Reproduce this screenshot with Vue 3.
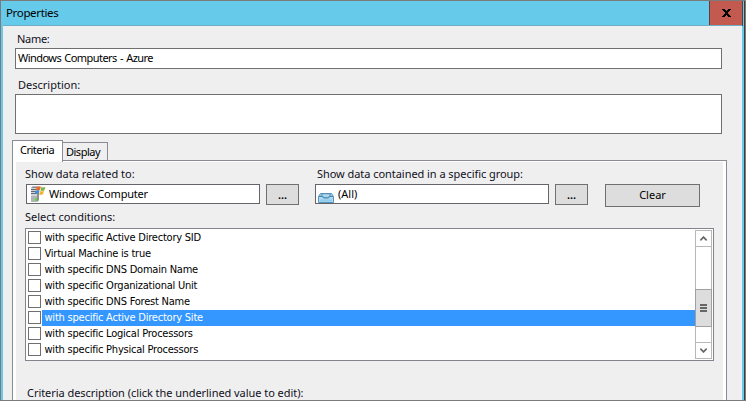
<script setup>
import { ref } from 'vue'

const name = ref('Windows Computers - Azure')
const conditions = [
  'with specific Active Directory SID',
  'Virtual Machine is true',
  'with specific DNS Domain Name',
  'with specific Organizational Unit',
  'with specific DNS Forest Name',
  'with specific Active Directory Site',
  'with specific Logical Processors',
  'with specific Physical Processors',
]
const selected = ref(5)
</script>

<template>
  <div class="window">
    <header class="titlebar">
      <span class="title">Properties</span>
      <button class="close" aria-label="Close">
        <svg width="9" height="8" viewBox="0 0 9 8" shape-rendering="crispEdges">
          <path d="M0 0h3v1h1v1h1v-1h1v-1h3v1h-1v1h-1v1h-1v2h1v1h1v1h1v1h-3v-1h-1v-1h-1v1h-1v1h-3v-1h1v-1h1v-1h1v-2h-1v-1h-1v-1h-1z" />
        </svg>
      </button>
    </header>

    <main class="client">
      <label class="label name-label">Name:</label>
      <div class="text-box name-box">{{ name }}</div>
      <label class="label desc-label">Description:</label>
      <div class="text-box desc-box"></div>

      <nav class="tabs">
        <div class="tab active">Criteria</div>
        <div class="tab">Display</div>
      </nav>

      <section class="panel">
        <div class="panel-body">
          <div class="pickers">
            <div class="picker related">
              <label class="label">Show data related to:</label>
              <div class="picker-row">
                <div class="field">
                  <svg class="server" width="16" height="17" viewBox="0 0 16 17">
                    <path d="M1 2 3 .5h6V14l-2 2H1z" fill="#d3d5d7" />
                    <path d="M7 3.500 9 2v12l-2 2z" fill="#8d9194" />
                    <path d="M1 2 2.500.5H8L7 2z" fill="#85898d" />
                    <path d="M1 3.500h5M1 5.500h5M1 7.500h6" stroke="#62676b" />
                    <path d="M1 10v6h6v-6z" fill="#b2b5b8" />
                    <path d="M5 12h2v3H5z" fill="#5ddb3f" />
                    <path d="M6.500 1.300Q9-.3 11 .8L9.800 4.300Q8 3.300 5.600 4.500z" fill="#e9692f" />
                    <path d="M11.400 1.100q1.800.9 4-.4l-1 3.500q-2 1.300-4 .3z" fill="#7fb545" />
                    <path d="M5.400 5Q7.600 3.800 9.600 4.800L8.600 8Q6.800 7 4.600 8.200z" fill="#438fda" />
                    <path d="M10.100 5q2 .9 4-.2L13 8.200Q11 9.400 9.100 8.400z" fill="#f5b12d" />
                  </svg>
                  <span>Windows Computer</span>
                </div>
                <button class="button browse">...</button>
              </div>
            </div>

            <div class="picker group">
              <label class="label">Show data contained in a specific group:</label>
              <div class="picker-row">
                <div class="field">
                  <svg class="tray" width="16" height="10" viewBox="0 0 16 10">
                    <path d="M2.500.5h11l2 3v6H.5v-6z" fill="#b4daef" stroke="#5590b9" />
                    <path d="M3 1h10l1 2.500h-2.500L10.500 5h-5l-1-1.500H2z" fill="#78afd0" />
                    <path d="M5 1.500h6v1.300l-1 1H6l-1-1z" fill="#b5dced" />
                    <path d="M1 3.500h3.500l1 1.500h5l1-1.500H15" fill="none" stroke="#4584b3" />
                    <path d="M2 7.500h12" stroke="#8bcdea" stroke-width="2" />
                  </svg>
                  <span>(All)</span>
                </div>
                <button class="button browse">...</button>
              </div>
            </div>

            <button class="button clear">Clear</button>
          </div>

          <label class="label conditions-label">Select conditions:</label>
          <div class="list">
            <ul class="items">
              <li v-for="(condition, i) in conditions" :key="condition" class="item" @click="selected = i">
                <span class="check"></span>
                <span class="item-text" :class="{ selected: i === selected }">{{ condition }}</span>
              </li>
            </ul>
            <div class="scrollbar">
              <div class="arrow up">
                <svg width="7" height="5" viewBox="0 0 7 5"><path d="M.3 4.300 3.500 1.100 6.700 4.300" /></svg>
              </div>
              <div class="thumb"><i></i><i></i><i></i></div>
              <div class="arrow down">
                <svg width="7" height="5" viewBox="0 0 7 5"><path d="M.3.700 3.500 3.900 6.700.700" /></svg>
              </div>
            </div>
          </div>
          <div class="label criteria-description">Criteria description (click the underlined value to edit):</div>
        </div>
      </section>
    </main>
  </div>
</template>

<style>
body {
  margin: 0;
  overflow: hidden;
}
</style>

<style scoped>
* {
  box-sizing: border-box;
}
.window {
  display: flex;
  flex-direction: column;
  width: 746px;
  height: 401px;
  overflow: hidden;
  border: 1px solid #7b7b7b;
  background: linear-gradient(to right, #66caea 741px, #66caea 743px, #3c3c3c 743px);
  color: #000;
  font: 11px/14px 'Noto Sans', sans-serif;
  white-space: nowrap;
}
.titlebar {
  display: flex;
  flex: none;
  justify-content: space-between;
  height: 25px;
  padding-right: 2px;
}
.title {
  padding: 5px 0 0 5px;
  font-size: 11.500px;
  letter-spacing: -0.350px;
}
.close {
  display: flex;
  justify-content: center;
  align-items: center;
  width: 34px;
  height: 25px;
  padding: 0;
  border: 1px solid #5e3f3e;
  border-top: 0;
  background: #c35a4f;
}
.client {
  display: flex;
  flex: 1;
  flex-direction: column;
  min-height: 0;
  width: 739px;
  margin-left: 2px;
  padding: 6px 15px 0 9px;
  background: #efefef;
  box-shadow: 0 -1px #6fafc6;
}
.label {
  display: block;
  height: 14px;
  color: #10101c;
}
.name-label {
  padding-left: 5px;
  letter-spacing: -0.300px;
}
.desc-label {
  margin-top: 9px;
  padding-left: 6px;
}
.text-box {
  flex: none;
  width: 707px;
  margin: 2px 0 0 3px;
  border: 1px solid #707070;
  background: #fff;
}
.name-box {
  height: 21px;
  padding: 2px 0 0 2px;
  letter-spacing: -0.550px;
  word-spacing: 0.900px;
}
.desc-box {
  height: 40px;
}
.tabs {
  display: flex;
  flex: none;
  align-items: flex-end;
  height: 20px;
  margin-top: 6px;
}
.tab {
  width: 45px;
  height: 18px;
  padding: 2px 0 0 3px;
  border: 1px solid #8b8b95;
  border-bottom: 0;
  border-left: 0;
  letter-spacing: -0.500px;
}
.tab.active {
  z-index: 1;
  width: 51px;
  height: 22px;
  margin-bottom: -2px;
  padding: 2px 0 0 7px;
  border-left: 1px solid #8b8b95;
  background: #fff;
}
.panel {
  flex: 1;
  min-height: 0;
  width: 715px;
  padding: 1px 3px 0;
  border: 1px solid #8b8b95;
  border-bottom: 0;
  background: #fff;
}
.panel-body {
  height: 100%;
  padding: 5px 9px 0;
  background: #efefef;
}
.pickers {
  display: flex;
  align-items: flex-end;
  height: 40px;
}
.picker-row {
  display: flex;
  align-items: flex-start;
  gap: 6px;
  height: 23px;
  margin-top: 3px;
}
.related .picker-row {
  margin-left: 1px;
}
.group {
  margin-left: 16px;
}
.group .label {
  padding-left: 2px;
  letter-spacing: -0.050px;
}
.field {
  display: flex;
  width: 234px;
  height: 20px;
  padding-top: 2px;
  border: 1px solid #64646a;
  background: #fff;
}
.related .field {
  letter-spacing: -0.190px;
}
.server {
  margin: -1px 3px 0 3px;
}
.tray {
  margin: 6px 4px 0 2px;
}
.button {
  padding: 0;
  border: 1px solid #707070;
  background: #ddd;
  color: #000;
  font: inherit;
}
.browse {
  width: 33px;
  height: 21px;
  font-weight: 600;
}
.clear {
  width: 95px;
  height: 23px;
  margin-left: 17px;
  padding-bottom: 2px;
}
.conditions-label {
  margin-top: 3px;
}
.list {
  display: flex;
  width: 689px;
  height: 133px;
  margin-top: 4px;
  padding: 1px;
  border: 1px solid #84848e;
  background: #fff;
}
.items {
  flex: 1;
  margin: 0;
  padding: 0 0 0 1px;
  list-style: none;
  font: 11px/16px 'DejaVu Sans Condensed', 'DejaVu Sans', sans-serif;
  letter-spacing: -0.220px;
}
.item {
  display: flex;
  height: 16px;
}
.check {
  width: 13px;
  height: 13px;
  margin: 1px 1px 0 0;
  border: 1px solid #707070;
}
.item-text {
  flex: 1;
  padding-left: 2.500px;
  line-height: 15px;
}
.item-text.selected {
  background: #3397ff;
  color: #fff;
}
.scrollbar {
  display: flex;
  flex-direction: column;
  width: 17px;
  height: 129px;
  border: 1px solid #b8b8b8;
}
.arrow {
  display: flex;
  justify-content: center;
  align-items: center;
  height: 16px;
}
.arrow path {
  fill: none;
  stroke: #666;
  stroke-width: 1.700;
}
.up {
  border-bottom: 1px solid #b8b8b8;
}
.down {
  margin-top: auto;
  border-top: 1px solid #b8b8b8;
}
.thumb {
  display: flex;
  flex-direction: column;
  justify-content: center;
  align-items: center;
  gap: 1px;
  width: 17px;
  height: 38px;
  margin: 42px 0 0 -1px;
  border: 1px solid #a0a0a0;
  background: #ddd;
}
.thumb i {
  width: 7px;
  height: 2px;
  background: #666;
}
.criteria-description {
  margin-top: 25px;
  padding-left: 2px;
  letter-spacing: -0.050px;
}
</style>
